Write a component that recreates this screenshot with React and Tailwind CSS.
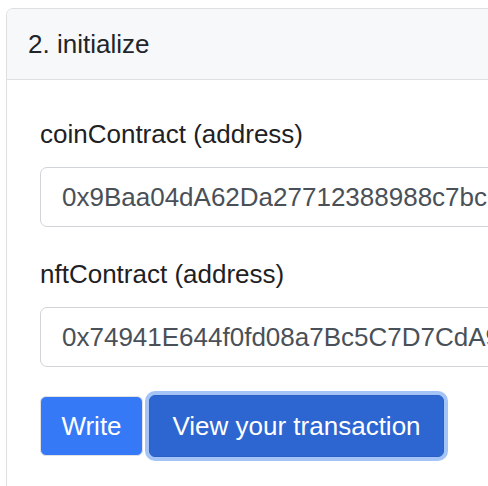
const fields = [
    { label: 'coinContract (address)', value: '0x9Baa04dA62Da27712388988c7bc2e1dbd6a3c3b0' },
    { label: 'nftContract (address)', value: '0x74941E644f0fd08a7Bc5C7D7CdA9e8fA1a2c3b4D' },
];

const App = () => {
    return (
        <div
            className="h-[486px] w-[488px] overflow-hidden bg-white pl-[6px] pt-[8px]"
            style={{ fontFamily: '"Liberation Sans", Arial, sans-serif' }}
        >
            <div className="w-[640px] rounded-[7px] border border-[#dedfe1] bg-white">
                {/* card header */}
                <div className="flex h-[71px] items-center rounded-t-[7px] border-b border-[#dedfe1] bg-[#f7f8f9] pl-[21px] text-[26px] text-[#212529]">
                    2. initialize
                </div>

                {/* card body */}
                <div className="pl-[33px] pt-[35px] pb-[60px]">
                    {fields.map((field) => (
                        <div key={field.label} className="mb-[28px]">
                            <label className="mb-[13px] block text-[26px] leading-[39px] text-[#1e2124]">
                                {field.label}
                            </label>
                            <div className="flex h-[60px] w-[560px] items-center overflow-hidden whitespace-nowrap rounded-[7px] border border-[#d0d4d9] bg-white pl-[21px] text-[26px] text-[#4a5057]">
                                {field.value}
                            </div>
                        </div>
                    ))}

                    <div className="flex items-start">
                        <button className="mt-px flex h-[60px] w-[103px] items-center justify-center rounded-[6px] border border-[#dfe1e4] bg-[#3579f6] text-[26px] text-white">
                            Write
                        </button>
                        <button className="ml-[6px] flex h-[62px] w-[295px] items-center justify-center rounded-[6px] border border-[#2a5fc6] bg-[#2d66d1] text-[26px] text-white ring-4 ring-[#a4c4f7]">
                            View your transaction
                        </button>
                    </div>
                </div>
            </div>
        </div>
    );
};

export default App;
